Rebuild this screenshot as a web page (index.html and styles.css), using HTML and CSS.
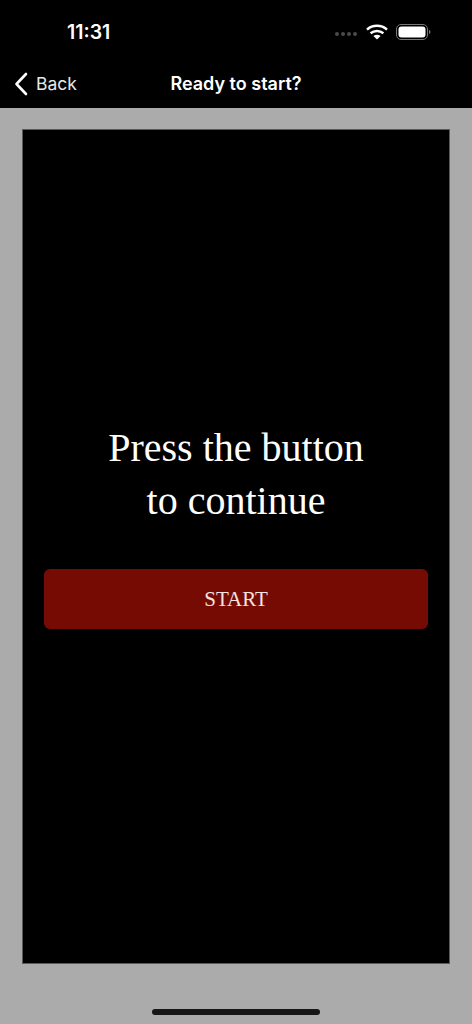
FILE: index.html
```html
<!DOCTYPE html>
<html lang="en">
<head>
<meta charset="utf-8">
<title>Ready to start?</title>
<link rel="stylesheet" href="styles.css">
</head>
<body>
<div class="screen">
  <header class="top">
    <div class="status">
      <span class="time">11:31</span>
      <div class="status-icons">
        <span class="signal"><i></i><i></i><i></i><i></i></span>
        <svg class="wifi" viewBox="0 0 22 16" width="22" height="16" aria-hidden="true">
          <path d="M1 5.6C6.6.6 15.4.6 21 5.6" fill="none" stroke="#fff" stroke-width="2.5"/>
          <path d="M4.6 9.2c3.6-3.1 9.2-3.1 12.8 0" fill="none" stroke="#fff" stroke-width="2.5"/>
          <path d="M7.4 12 11 15.6 14.6 12c-2-1.7-5.2-1.7-7.2 0z" fill="#fff"/>
        </svg>
        <svg class="battery" viewBox="0 0 36 16" width="36" height="16" aria-hidden="true">
          <rect x="0.5" y="0.5" width="31" height="15" rx="4.5" fill="none" stroke="#777"/>
          <rect x="2.5" y="2.5" width="27" height="11" rx="3" fill="#fff"/>
          <path d="M33 6v4c.9-.3 1.4-1.100 1.400-2S33.900 6.300 33 6z" fill="#777"/>
        </svg>
      </div>
    </div>
    <nav class="nav">
      <a class="back">
        <svg viewBox="0 0 14 24" width="14" height="24" aria-hidden="true">
          <path d="M12 2 2.500 12 12 22" fill="none" stroke="#fff" stroke-width="2.600" stroke-linecap="round" stroke-linejoin="round"/>
        </svg>
        <span>Back</span>
      </a>
      <h1 class="nav-title">Ready to start?</h1>
    </nav>
  </header>
  <main class="content">
    <section class="card">
      <h2 class="prompt">Press the button<br>to continue</h2>
      <button class="start" type="button">START</button>
    </section>
  </main>
  <div class="home-bar"><span></span></div>
</div>
</body>
</html>
```
FILE: styles.css
```css
* { box-sizing: border-box; }
html, body { margin: 0; padding: 0; height: 100%; }
body { background: #ababab; font-family: "Inter", "Liberation Sans", sans-serif; overflow: hidden; }
.screen { height: 1024px; display: flex; flex-direction: column; }
.top { height: 108px; background: #000; color: #fff; flex: none; }
.status { height: 64px; display: flex; align-items: center; justify-content: space-between; padding: 0 40px 0 67px; }
.time { font-size: 19.5px; font-weight: 600; line-height: 20px; }
.status-icons { display: flex; align-items: center; }
.signal { display: flex; gap: 2px; margin-top: 4px; margin-right: 9px; }
.signal i { width: 4px; height: 4px; border-radius: 50%; background: #4a4a4a; }
.wifi { margin-right: 8px; margin-top: -1px; }
.nav { height: 44px; position: relative; display: flex; align-items: center; justify-content: center; }
.back { position: absolute; left: 14px; top: 8px; display: flex; align-items: center; gap: 9px; font-size: 17.5px; line-height: 24px; color: #e8e8e8; }
.back span { margin-left: -1px; }
.back svg { display: block; }
.nav-title { margin: 0; font-size: 18px; font-weight: 600; line-height: 24px; margin-top: -4px; }
.content { flex: none; height: 856px; padding: 21px 22px 0; }
.card { height: 835px; background: #000; border: 1px solid #5a5a5a; display: flex; flex-direction: column; align-items: stretch; padding: 291px 21px 0; }
.prompt { margin: 0; color: #fff; font-family: "Liberation Serif", "Times New Roman", serif; font-weight: 400; font-size: 40px; line-height: 53px; text-align: center; }
.start { margin-top: 42px; height: 60px; background: #760b04; border: 0; border-radius: 6px; color: #f4e4e2; font-family: "Liberation Serif", "Times New Roman", serif; font-size: 21px; }
.home-bar { flex: 1; display: flex; justify-content: center; padding-top: 45px; }
.home-bar span { width: 168px; height: 6px; border-radius: 3px; background: #171717; }
```
